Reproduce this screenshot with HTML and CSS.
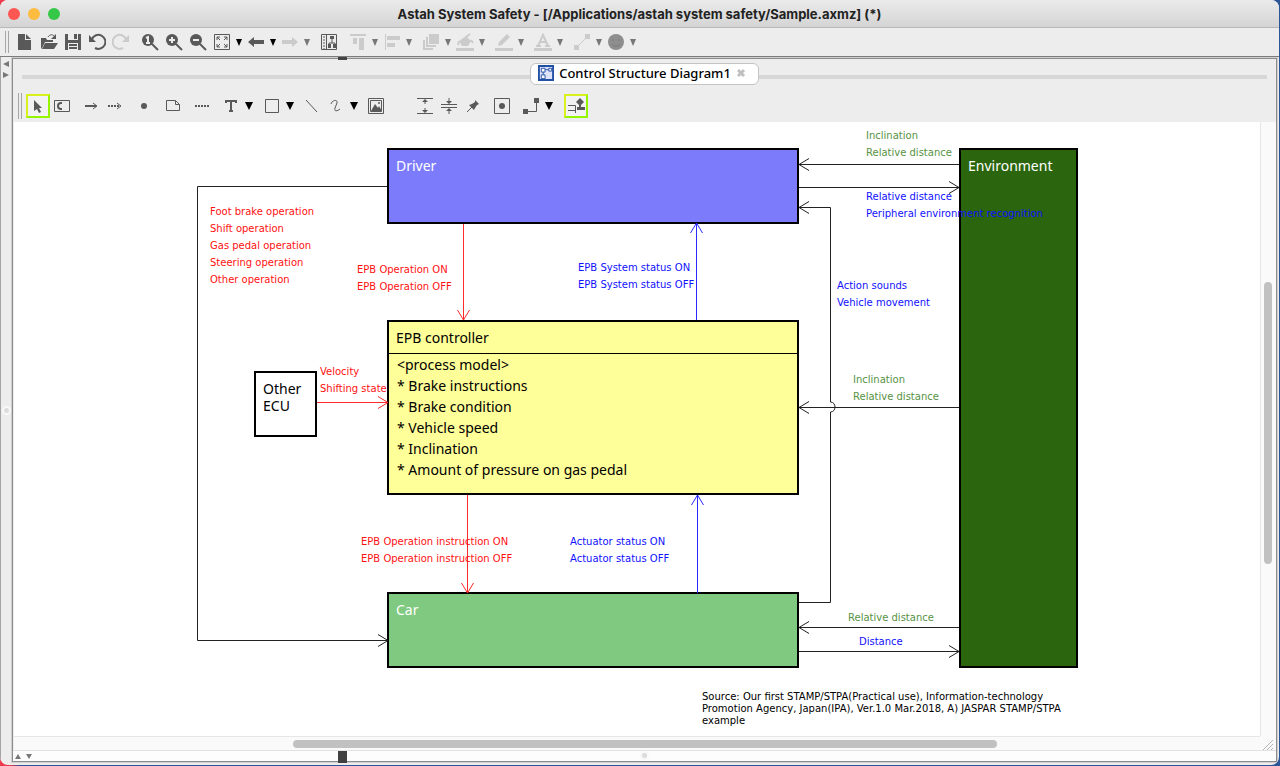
FILE: index.html
```
<!DOCTYPE html>
<html lang="en">
<head>
  <meta charset="UTF-8">
  <meta name="viewport" content="width=device-width, initial-scale=1.0">
  <title>Astah System Safety</title>
  <link rel="stylesheet" href="styles.css">
</head>
<body>

<div class="window">

  <header class="titlebar">
    <div class="lights">
      <button class="light red" aria-label="Close"></button>
      <button class="light yellow" aria-label="Minimize"></button>
      <button class="light green" aria-label="Zoom"></button>
    </div>
    <h1>Astah System Safety - [/Applications/astah system safety/Sample.axmz] (*)</h1>
  </header>

  <!-- main toolbar -->
  <div class="toolbar main-tools">
    <span class="grip"></span>
    <button class="tool" aria-label="New"><svg viewBox="0 0 18 18"><path class="f" d="M2 1h7v6h6v10H2zM10 1l5 5h-5z"/></svg></button>
    <button class="tool" aria-label="Open"><svg viewBox="0 0 18 18"><path class="f" d="M1 16V5h5l1 2h6v2H5l-3 6zM5 10h13l-4 6H2z"/><path class="s" d="M8 4c2-3 5-3 7 0"/><path class="f" d="M16 1v5h-5z"/></svg></button>
    <button class="tool" aria-label="Save"><svg viewBox="0 0 18 18"><path class="f" fill-rule="evenodd" d="M1 1h16v16H1zM4 1v6h10V1zM4 10v7h10v-7z"/><path class="f" d="M10 1h3v5h-3zM5 11h8v2H5zM5 14h8v2H5z"/></svg></button>
    <button class="tool" aria-label="Undo"><svg viewBox="0 0 18 18"><path class="s2" d="M4 6a7 7 0 1 1 3 9"/><path class="f" d="M1 2v7h7z"/></svg></button>
    <button class="tool pale" aria-label="Redo"><svg viewBox="0 0 18 18"><path class="s2" d="M14 6a7 7 0 1 0-3 9"/><path class="f" d="M17 2v7h-7z"/></svg></button>
    <span class="gap"></span>
    <button class="tool" aria-label="Actual size"><svg viewBox="0 0 18 18"><circle class="f" cx="7" cy="7" r="6"/><path class="s2" d="M11 11l6 6"/><path class="w" d="M5 5l2-1v6M5 10h4"/></svg></button>
    <button class="tool" aria-label="Zoom in"><svg viewBox="0 0 18 18"><circle class="f" cx="7" cy="7" r="6"/><path class="s2" d="M11 11l6 6"/><path class="w" d="M7 4v6M4 7h6"/></svg></button>
    <button class="tool" aria-label="Zoom out"><svg viewBox="0 0 18 18"><circle class="f" cx="7" cy="7" r="6"/><path class="s2" d="M11 11l6 6"/><path class="w" d="M4 7h6"/></svg></button>
    <button class="tool" aria-label="Fit window"><svg viewBox="0 0 18 18"><path class="s" d="M1.500 1.500h15v15h-15zM4 7V4h3M11 4h3v3M14 11v3h-3M7 14H4v-3M4 4l3 3M14 4l-3 3M14 14l-3-3M4 14l3-3"/></svg></button>
    <button class="drop" aria-label="Fit options"></button>
    <button class="tool" aria-label="Back"><svg viewBox="0 0 18 18"><path class="f" d="M1 9l6-5v3h10v4H7v3z"/></svg></button>
    <button class="drop" aria-label="Back history"></button>
    <button class="tool pale" aria-label="Forward"><svg viewBox="0 0 18 18"><path class="f" d="M17 9l-6-5v3H1v4h10v3z"/></svg></button>
    <button class="drop dim" aria-label="Forward history"></button>
    <span class="gap"></span>
    <button class="tool" aria-label="Show in tree"><svg viewBox="0 0 18 18"><path class="s" d="M1.500 1.500h15v15h-15zM6.500 1v16M12 5v5M9 12v-2h6v2"/><path class="s" stroke-dasharray="2 1" d="M4 3v13"/><path class="f" d="M10 3h4v3h-4zM8 11h3v4H8zM13 11h3v4h-3z"/></svg></button>
    <span class="gap"></span>
    <button class="tool pale" aria-label="Align top"><svg viewBox="0 0 18 18"><path class="f" d="M1 1h16v2H1zM4 5h4v6H4zM10 5h5v12h-5z"/></svg></button>
    <button class="drop dim" aria-label="Vertical alignment"></button>
    <button class="tool pale" aria-label="Align left"><svg viewBox="0 0 18 18"><path class="f" d="M2 1h1v16H2zM4 3h13v4H4zM4 10h8v4H4z"/></svg></button>
    <button class="drop dim" aria-label="Horizontal alignment"></button>
    <span class="gap"></span>
    <button class="tool pale" aria-label="Order"><svg viewBox="0 0 18 18"><path class="f" d="M7 1h10v10H7zM4 4h2v8h8v2H4zM1 7h2v8h8v2H1z"/></svg></button>
    <button class="drop dim" aria-label="Order options"></button>
    <button class="tool pale" aria-label="Fill color"><svg viewBox="0 0 18 18"><path class="f" d="M0 15h18v3H0zM3 8l7-5 5 5-3 5H6z"/><path class="s2" d="M10 4l4-3M3 8l-1 4M15 7l2 3"/></svg></button>
    <button class="drop dim" aria-label="Fill options"></button>
    <span class="gap"></span>
    <button class="tool pale" aria-label="Line color"><svg viewBox="0 0 18 18"><path class="f" d="M0 15h18v3H0zM3 13l1-4 8-8 3 3-8 8z"/></svg></button>
    <button class="drop dim" aria-label="Line color options"></button>
    <span class="gap"></span>
    <button class="tool pale" aria-label="Font color"><svg viewBox="0 0 18 18"><path class="f" d="M0 15h18v3H0z"/><path class="s2" d="M4 13L9 2l5 11M6 9h6M2 13h5M11 13h5"/></svg></button>
    <button class="drop dim" aria-label="Font options"></button>
    <span class="gap"></span>
    <button class="tool pale" aria-label="Line style"><svg viewBox="0 0 18 18"><path class="f" d="M1 12h5v5H1zM12 1h5v5h-5z"/><path class="s" d="M5 13l8-8"/></svg></button>
    <button class="drop dim" aria-label="Line options"></button>
    <button class="tool mid" aria-label="Stereotype"><svg viewBox="0 0 18 18"><circle class="f" cx="9" cy="9" r="8"/><path d="M6 6v2M12 6v2M5 11c2 3 6 3 8 0" fill="none" stroke="#7b7b7b"/></svg></button>
    <button class="drop dim" aria-label="Stereotype options"></button>
  </div>

  <div class="body">
    <!-- collapsed project tree -->
    <aside class="gutter">
      <button class="collapse left" aria-label="Collapse left"></button>
      <button class="collapse right" aria-label="Expand right"></button>
      <span class="knob"></span>
    </aside>

    <main class="editor">
      <span class="split-mark"></span>
      <div class="tabs">
        <div class="tab">
          <svg class="tab-icon" viewBox="0 0 17 17"><path d="M1 1h15v15H1z" fill="#dfe3fa" stroke="#2250a5" stroke-width="2"/><path d="M3.500 3.500h4v4h-4zM3.500 10.500h4v4h-4zM11.500 3.500h3v3h-3zM5.500 7.500v3M7.500 5h4" fill="#fff" stroke="#2250a5"/></svg>
          <span>Control Structure Diagram1</span>
          <button class="close" aria-label="Close tab"><svg viewBox="0 0 10 10"><path d="M2 2l6 6M8 2L2 8" stroke="#c0c0c0" stroke-width="3"/></svg></button>
        </div>
      </div>

      <!-- diagram toolbar -->
      <div class="toolbar diagram-tools">
        <span class="grip"></span>
        <button class="tool on" aria-label="Select"><svg viewBox="0 0 18 18"><path class="f" d="M5 3v11l3-2 2 4 2-1-2-4h3z"/></svg></button>
        <button class="tool" aria-label="Component"><svg viewBox="0 0 18 18"><path class="s" d="M1.500 3.500h15v11h-15z"/><path class="s2" d="M9 6H8c-4 0-4 6 0 6h1"/></svg></button>
        <span class="gap"></span>
        <button class="tool" aria-label="Control action"><svg viewBox="0 0 18 18"><path class="s2" d="M3 9h11"/><path class="s" d="M11 6l4 3-4 3"/></svg></button>
        <button class="tool" aria-label="Feedback"><svg viewBox="0 0 18 18"><path class="s2" stroke-dasharray="2 1" d="M2 9h12"/><path class="s" d="M11 6l4 3-4 3"/></svg></button>
        <span class="gap"></span>
        <button class="tool" aria-label="Point"><svg viewBox="0 0 18 18"><circle class="f" cx="9" cy="9" r="3"/></svg></button>
        <span class="gap"></span>
        <button class="tool" aria-label="Note"><svg viewBox="0 0 18 18"><path class="s" d="M2.500 3.500h9l4 4v6h-13zM11.500 3.500v4h4"/></svg></button>
        <span class="gap"></span>
        <button class="tool" aria-label="Note anchor"><svg viewBox="0 0 18 18"><path class="s2" stroke-dasharray="2 1" d="M2 9h15"/></svg></button>
        <span class="gap"></span>
        <button class="tool" aria-label="Text"><svg viewBox="0 0 18 18"><path class="s2" d="M4 6V4h10v2M9 4v10M7 14h4"/></svg></button>
        <button class="drop" aria-label="Text options"></button>
        <span class="gap"></span>
        <button class="tool" aria-label="Rectangle"><svg viewBox="0 0 18 18"><path class="s" d="M2.500 2.500h13v13h-13z"/></svg></button>
        <button class="drop" aria-label="Shape options"></button>
        <span class="gap narrow"></span>
        <button class="tool" aria-label="Line"><svg viewBox="0 0 18 18"><path class="s" d="M3 3l11 12"/></svg></button>
        <button class="tool" aria-label="Freehand"><svg viewBox="0 0 18 18"><path class="s" d="M4 7c1-4 7-5 6-1l-2 5c-1 3 1 4 5 1"/></svg></button>
        <button class="drop" aria-label="Freehand options"></button>
        <span class="gap narrow"></span>
        <button class="tool" aria-label="Image"><svg viewBox="0 0 18 18"><path class="s" d="M1.500 1.500h15v15h-15zM3.500 3.500h11v11h-11z"/><path class="f" d="M4 14l4-7 3 4 1-2 3 5z"/><circle class="f" cx="12" cy="6" r="1"/></svg></button>
        <span class="gap wide"></span>
        <button class="tool" aria-label="Widen vertically"><svg viewBox="0 0 18 18"><path class="s" d="M1 1.500h16M1 16.500h16M9 3v4M9 11v4"/><path class="f" d="M9 2l3 3H6zM9 16l3-3H6z"/></svg></button>
        <button class="tool" aria-label="Narrow vertically"><svg viewBox="0 0 18 18"><path class="s" d="M1 7.500h16M1 10.500h16M9 1v4M9 13v4"/><path class="f" d="M9 7l3-3H6zM9 11l3 3H6z"/></svg></button>
        <button class="tool" aria-label="Pin"><svg viewBox="0 0 18 18"><path class="f" d="M11 3l4 4-2 1-2 3-1 2-5-5 3-1 3-2z"/><path class="s" d="M3 15l5-5"/></svg></button>
        <span class="gap"></span>
        <button class="tool" aria-label="Center"><svg viewBox="0 0 18 18"><path class="s" d="M1.500 1.500h15v15h-15z"/><circle class="f" cx="9" cy="9" r="3"/></svg></button>
        <span class="gap"></span>
        <button class="tool" aria-label="Connector style"><svg viewBox="0 0 18 18"><path class="f" d="M1 12h5v5H1zM12 1h5v5h-5z"/><path class="s" d="M5 14.500h9.500V5"/></svg></button>
        <button class="drop" aria-label="Connector options"></button>
        <span class="gap double"></span>
        <button class="tool on" aria-label="Line jump"><svg viewBox="0 0 18 18"><path class="s" d="M1 8.500h7.500V16M1 13.500h7"/><path class="f" d="M13 1l4 4-4 4-4-4zM12 8h2v2h4v3h-8v-3h2z"/></svg></button>
      </div>

      <div class="view">
        <div class="canvas">
          <div class="node driver">Driver</div>
          <div class="node env">Environment</div>
          <div class="node epb">
            <div class="name">EPB controller</div>
            <ul>
              <li>&lt;process model&gt;</li>
              <li>* Brake instructions</li>
              <li>* Brake condition</li>
              <li>* Vehicle speed</li>
              <li>* Inclination</li>
              <li>* Amount of pressure on gas pedal</li>
            </ul>
          </div>
          <div class="node ecu">Other<br>ECU</div>
          <div class="node car">Car</div>

          <svg class="wires" width="1100" height="560" viewBox="0 0 1100 560">
            <defs>
              <marker id="head" markerWidth="12" markerHeight="14" refX="11" refY="7" orient="auto" markerUnits="userSpaceOnUse">
                <path d="M1 1l10 6-10 6" fill="none" stroke="context-stroke"/>
              </marker>
            </defs>
            <g class="black">
              <path d="M373 64.500H183.500v454H374"/>
              <path d="M945 42.500H785"/>
              <path d="M785 65.500h160"/>
              <path d="M785 480.500h31.500V290c6 0 6-10 0-10V85.500H785"/>
              <path d="M945 285.500H785"/>
              <path d="M945 505.500H785"/>
              <path d="M785 529.500h160"/>
            </g>
            <g class="red-line">
              <path d="M449.500 102v96"/>
              <path d="M303 280.500h71"/>
              <path d="M453.500 373v98"/>
            </g>
            <g class="blue-line">
              <path d="M682.500 198v-97"/>
              <path d="M683.500 471v-98"/>
            </g>
          </svg>

          <p class="label red-text l-driver-car">Foot brake operation<br>Shift operation<br>Gas pedal operation<br>Steering operation<br>Other operation</p>
          <p class="label red-text l-driver-epb">EPB Operation ON<br>EPB Operation OFF</p>
          <p class="label blue-text l-epb-driver">EPB System status ON<br>EPB System status OFF</p>
          <p class="label red-text l-ecu-epb">Velocity<br>Shifting state</p>
          <p class="label red-text l-epb-car">EPB Operation instruction ON<br>EPB Operation instruction OFF</p>
          <p class="label blue-text l-car-epb">Actuator status ON<br>Actuator status OFF</p>
          <p class="label green-text l-env-driver">Inclination<br>Relative distance</p>
          <p class="label blue-text l-driver-env">Relative distance<br>Peripheral environment recognition</p>
          <p class="label blue-text l-car-driver">Action sounds<br>Vehicle movement</p>
          <p class="label green-text l-env-epb">Inclination<br>Relative distance</p>
          <p class="label green-text l-env-car">Relative distance</p>
          <p class="label blue-text l-car-env">Distance</p>

          <p class="source">Source: Our first STAMP/STPA(Practical use), Information-technology<br>Promotion Agency, Japan(IPA), Ver.1.0 Mar.2018, A) JASPAR STAMP/STPA<br>example</p>
        </div>
        <div class="vscroll"><span class="thumb"></span></div>
        <div class="hscroll"><span class="thumb"></span></div>
        <svg class="resize" viewBox="0 0 14 14"><path d="M3 14L13 4M7 14l6-6M11 14l2-2" stroke="#b5b5b5"/></svg>
      </div>

      <div class="bottom">
        <button class="collapse up" aria-label="Expand up"></button>
        <button class="collapse down" aria-label="Collapse down"></button>
        <span class="split-block"></span>
        <span class="knob"></span>
      </div>
    </main>
  </div>
</div>

</body>
</html>
```

FILE: styles.css
```
* {
  box-sizing: border-box;
}

body {
  margin: 0;
  height: 100vh;
  background: linear-gradient(90deg, #ee3a4a 0, #ee3a4a 10px, #2b5596 20px);
  font-family: "Noto Sans", "Open Sans", sans-serif;
  color: #000;
}

button {
  padding: 0;
  border: 0;
  background: none;
}

.window {
  display: flex;
  flex-direction: column;
  height: calc(100vh - 1px);
  margin-right: 1px;
  background: #ededed;
  border-radius: 8px;
  overflow: hidden;
}

/* title bar */
.titlebar {
  display: flex;
  align-items: center;
  flex: none;
  height: 28px;
  padding: 0 8px;
  background: linear-gradient(#ebebeb, #d4d4d4);
  border-bottom: 1px solid #b9b9b9;
}

.titlebar h1 {
  flex: 1;
  margin: 0;
  padding-right: 56px;
  text-align: center;
  font: 700 13px Inter, sans-serif;
  color: #222;
}

.lights {
  display: flex;
  gap: 8px;
  width: 56px;
}

.light {
  width: 12px;
  height: 12px;
  border-radius: 50%;
}

.red { background: #fc5753; }
.yellow { background: #fdbc40; }
.green { background: #34c748; }

/* toolbars */
.toolbar {
  display: flex;
  align-items: center;
  flex: none;
  color: #595959;
}

.main-tools {
  height: 28px;
  padding-left: 5px;
}

.diagram-tools {
  height: 34px;
  padding: 2px 0 0 5px;
}

.grip {
  width: 4px;
  height: 22px;
  margin-right: 4px;
  border: solid #a6a6a6;
  border-width: 0 1px;
}

.diagram-tools .grip {
  height: 26px;
}

.tool {
  display: flex;
  align-items: center;
  justify-content: center;
  width: 24px;
  height: 24px;
  color: inherit;
}

.tool svg {
  flex: none;
  width: 18px;
  height: 18px;
}

.tool.pale { color: #cbcbcb; }
.tool.mid { color: #8e8e8e; }

.tool.on {
  border: 2px solid;
  border-color: #d8f01c #96f500 #96f500 #d8f01c;
  background: #f2f2f2;
}

.tool.on svg {
  color: #595959;
}

.f { fill: currentColor; }
.s { fill: none; stroke: currentColor; }
.s2 { fill: none; stroke: currentColor; stroke-width: 2; }
.w { fill: none; stroke: #ededed; stroke-width: 2; }

.drop {
  width: 10px;
  height: 24px;
  display: flex;
  align-items: center;
  justify-content: center;
}

.diagram-tools .drop {
  width: 12px;
}

.drop::before {
  content: "";
  border: solid transparent;
  border-width: 7px 3px 0;
  border-top-color: #000;
}

.diagram-tools .drop::before {
  border-width: 8px 4px 0;
}

.drop.dim::before {
  border-top-color: #777;
}

.gap { width: 5px; }
.gap.narrow { width: 4px; }
.gap.double { width: 9px; }
.gap.wide { width: 25px; }

/* editor area */
.body {
  display: flex;
  flex: 1;
  min-height: 0;
  border-top: 1px solid #7c7c7c;
}

.gutter {
  display: flex;
  flex-direction: column;
  gap: 3px;
  position: relative;
  width: 12px;
  padding: 3px 2px;
  border-left: 1px solid #a5a5a5;
}

.collapse {
  width: 7px;
  height: 8px;
}

.collapse::before {
  content: "";
  display: block;
  width: 0;
  border: 3px solid transparent;
}

.collapse.left::before { border-width: 3px 6px 3px 0; border-right-color: #777; }
.collapse.right::before { border-width: 3px 0 3px 6px; border-left-color: #777; }
.collapse.up::before { border-width: 0 3px 5px; border-bottom-color: #777; }
.collapse.down::before { border-width: 5px 3px 0; border-top-color: #777; }

.knob {
  position: absolute;
  top: 50%;
  left: 1px;
  width: 9px;
  height: 9px;
  margin-top: -5px;
  border: 2px solid #f8f8f8;
  border-radius: 50%;
  background: #dcdcdc;
}

.editor {
  display: flex;
  flex-direction: column;
  flex: 1;
  min-width: 0;
  position: relative;
  margin: 1px 2px 3px 0;
  border: 1px solid #8c8c8c;
  box-shadow: 0 0 0 1px #cfcfcf;
}

.split-mark {
  position: absolute;
  top: -2px;
  left: 325px;
  width: 9px;
  height: 3px;
  background: #444;
}

.tabs {
  display: flex;
  justify-content: center;
  flex: none;
  height: 29px;
  padding-top: 4px;
  background: linear-gradient(#d7d7d7, #d7d7d7) center 16px / calc(100% - 18px) 4px no-repeat;
}

.tab {
  display: flex;
  align-items: center;
  gap: 5px;
  height: 22px;
  padding: 0 12px 3px 7px;
  background: #fff;
  border: 1px solid #c4c4c4;
  border-radius: 6px;
  font-size: 13px;
  font-weight: 500;
}

.tab-icon {
  width: 16px;
  height: 16px;
}

.close {
  width: 10px;
  height: 10px;
  display: flex;
}

.view {
  display: grid;
  grid-template-columns: 1fr 16px;
  grid-template-rows: 1fr 14px;
  flex: 1;
  min-height: 0;
  margin-left: 1px;
  background: #fafafa;
}

.canvas {
  position: relative;
  overflow: hidden;
  background: #fff;
}

.vscroll {
  padding: 0 3px;
  border-left: 1px solid #e6e6e6;
}

.hscroll {
  padding: 3px 0;
  border-top: 1px solid #e6e6e6;
}

.thumb {
  display: block;
  border-radius: 4px;
  background: #c1c1c1;
}

.vscroll .thumb {
  width: 8px;
  height: 46%;
  margin-top: 160px;
}

.hscroll .thumb {
  width: 56.5%;
  height: 8px;
  margin-left: 22.4%;
}

.resize {
  width: 14px;
  height: 14px;
}

.bottom {
  display: flex;
  align-items: center;
  gap: 4px;
  flex: none;
  position: relative;
  height: 11px;
  padding-left: 2px;
  background: #fdfdfd;
  border-top: 1px solid #e2e2e2;
}

.bottom .knob {
  left: 50%;
  margin-left: -5px;
}

.split-block {
  position: absolute;
  top: 0;
  left: 325px;
  width: 9px;
  height: 12px;
  background: #3f403f;
}

/* diagram */
.node {
  position: absolute;
  border: 2px solid #000;
  padding: 7px;
  font-size: 14px;
  line-height: 17px;
}

.driver {
  left: 373px;
  top: 26px;
  width: 412px;
  height: 76px;
  background: #7b7bfb;
  color: #fff;
}

.env {
  left: 945px;
  top: 26px;
  width: 119px;
  height: 520px;
  background: #2b650e;
  color: #fff;
}

.epb {
  left: 373px;
  top: 198px;
  width: 412px;
  height: 175px;
  padding: 0;
  background: #ffff99;
}

.epb .name {
  height: 32px;
  padding: 7px;
  border-bottom: 1px solid #000;
}

.epb ul {
  margin: 0;
  padding: 0 8px;
  list-style: none;
  line-height: 21px;
}

.ecu {
  left: 240px;
  top: 249px;
  width: 63px;
  height: 66px;
  background: #fff;
}

.car {
  left: 373px;
  top: 470px;
  width: 412px;
  height: 76px;
  background: #80c980;
  color: #fff;
}

.wires {
  position: absolute;
  left: 0;
  top: 0;
  fill: none;
}

.black { stroke: #222; }
.red-line { stroke: #ff2a2a; }
.blue-line { stroke: #2a2aff; }
.wires g path { marker-end: url(#head); }

.label,
.source {
  position: absolute;
  margin: 0;
  font-family: "DejaVu Sans", "Noto Sans", sans-serif;
  font-size: 10px;
  line-height: 17px;
  white-space: nowrap;
}

.red-text { color: #f11; }
.blue-text { color: #11f; }
.green-text { color: #579244; }

.l-driver-car { left: 196px; top: 81px; }
.l-driver-epb { left: 343px; top: 139px; }
.l-epb-driver { left: 564px; top: 137px; }
.l-ecu-epb { left: 306px; top: 241px; }
.l-epb-car { left: 347px; top: 411px; }
.l-car-epb { left: 556px; top: 411px; }
.l-env-driver { left: 852px; top: 5px; }
.l-driver-env { left: 852px; top: 66px; }
.l-car-driver { left: 823px; top: 155px; }
.l-env-epb { left: 839px; top: 249px; }
.l-env-car { left: 834px; top: 487px; }
.l-car-env { left: 845px; top: 511px; }

.source {
  left: 688px;
  top: 569px;
  line-height: 12px;
}
```
